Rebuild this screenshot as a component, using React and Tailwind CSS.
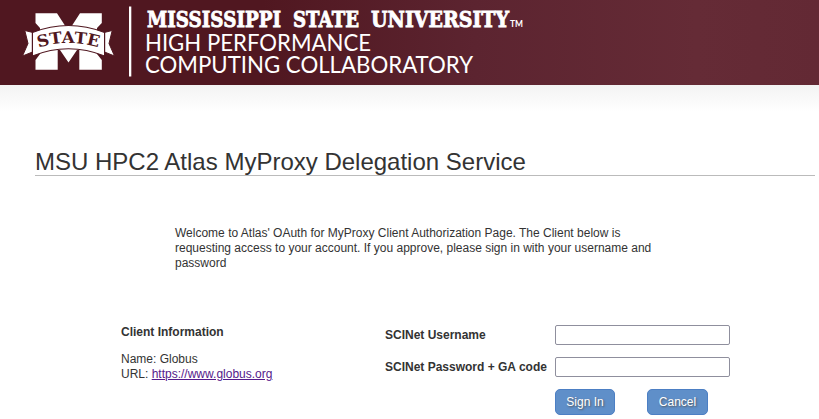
function Emblem() {
  return (
    <svg width="540" height="85" viewBox="0 0 540 85" className="block" role="img" aria-label="Mississippi State University High Performance Computing Collaboratory">
      <defs>
        <path id="arc" d="M37 48.2 Q68.5 37.8 101 48.2" />
      </defs>
      <path fill="#fff" d="M35.5 13.3H57L68.5 31L80 13.3H101.8V23L97 28V54L101.8 60V69.7H79.3V50H77L68.5 62.5L60 50H57.7V69.7H35.5V60L40 54V28L35.5 23Z" />
      <path fill="#fff" stroke="#501720" strokeWidth="1" d="M24.8 30.5L35 33V51L22.5 56L28 43.5Z M112.2 30.5L102 33V51L114.5 56L109 43.5Z" />
      <path fill="#fff" stroke="#501720" strokeWidth="1.2" d="M32.4 32.5Q68.5 18.5 104.6 32.5V56Q68.5 41.5 32.4 56Z" />
      <text fill="#501720" fontSize="16" fontWeight="700" fontFamily="'DejaVu Serif','Liberation Serif',serif">
        <textPath href="#arc" startOffset="1.5" textLength="61" lengthAdjust="spacingAndGlyphs">STATE</textPath>
      </text>
      <rect x="129" y="6.5" width="2.3" height="70" fill="#fff" />
      <g fill="#fff">
        <g stroke="#fff" strokeWidth="0.9" fontSize="22.5" fontWeight="700" fontFamily="'DejaVu Serif','Liberation Serif',serif">
          <text x="147" y="26.6" textLength="134" lengthAdjust="spacingAndGlyphs">MISSISSIPPI</text>
          <text x="293" y="26.6" textLength="66" lengthAdjust="spacingAndGlyphs">STATE</text>
          <text x="371" y="26.6" textLength="138" lengthAdjust="spacingAndGlyphs">UNIVERSITY</text>
        </g>
        <text x="510" y="27" fontSize="9" fontWeight="700" textLength="13" lengthAdjust="spacingAndGlyphs" fontFamily="Lato,sans-serif">TM</text>
        <g fontSize="22.5" fontFamily="Lato,sans-serif">
          <text x="145" y="50.5" textLength="226" lengthAdjust="spacingAndGlyphs">HIGH PERFORMANCE</text>
          <text x="145" y="72.5" textLength="328" lengthAdjust="spacingAndGlyphs">COMPUTING COLLABORATORY</text>
        </g>
      </g>
    </svg>
  );
}

function Field({ label, type }) {
  return (
    <label className="flex h-8 items-start">
      <span className="w-[170px] pt-[3px] font-bold">{label}</span>
      <input type={type} className="h-5 w-[175px] rounded-[2px] border border-[#8f8f9d] bg-white px-1" />
    </label>
  );
}

function Button({ children, className }) {
  return (
    <button className={`h-[26px] rounded-[5px] border border-[#4c7fc4] bg-[#5f8fc9] text-white [text-shadow:1px_1px_2px_#555] ${className}`}>
      {children}
    </button>
  );
}

export default function App() {
  return (
    <div className="h-[419px] w-[819px] overflow-hidden bg-white font-['Liberation_Sans',Arial,sans-serif] text-[12px] leading-[15px] text-[#333]">
      <header className="h-[85px] bg-[linear-gradient(90deg,#501720_0%,#501720_32%,#5c2430_58%,#652b36_85%,#632934_100%)]">
        <Emblem />
      </header>
      <div className="h-[27px] bg-linear-to-b from-[#f3f3f3] to-white" />
      <main className="pl-[35px]">
        <h1 className="mt-9 h-7 w-[780px] border-b border-[#bbb] text-[24px] leading-[28px]">
          MSU HPC2 Atlas MyProxy Delegation Service
        </h1>
        <p className="mt-[50px] ml-[140px] w-[500px]">
          Welcome to Atlas' OAuth for MyProxy Client Authorization Page. The Client below is<br />
          requesting access to your account. If you approve, please sign in with your username and<br />
          password
        </p>
        <div className="mt-[54px] ml-[86px] flex">
          <section className="w-[264px]">
            <h2 className="font-bold">Client Information</h2>
            <p className="mt-3">
              Name: Globus<br />
              URL: <a href="https://www.globus.org" className="text-[#551a8b] underline">https://www.globus.org</a>
            </p>
          </section>
          <form onSubmit={(e) => e.preventDefault()}>
            <Field label="SCINet Username" type="text" />
            <Field label="SCINet Password + GA code" type="password" />
            <div className="ml-[170px] flex gap-8">
              <Button className="w-[60px]">Sign In</Button>
              <Button className="w-[61px]">Cancel</Button>
            </div>
          </form>
        </div>
      </main>
    </div>
  );
}
